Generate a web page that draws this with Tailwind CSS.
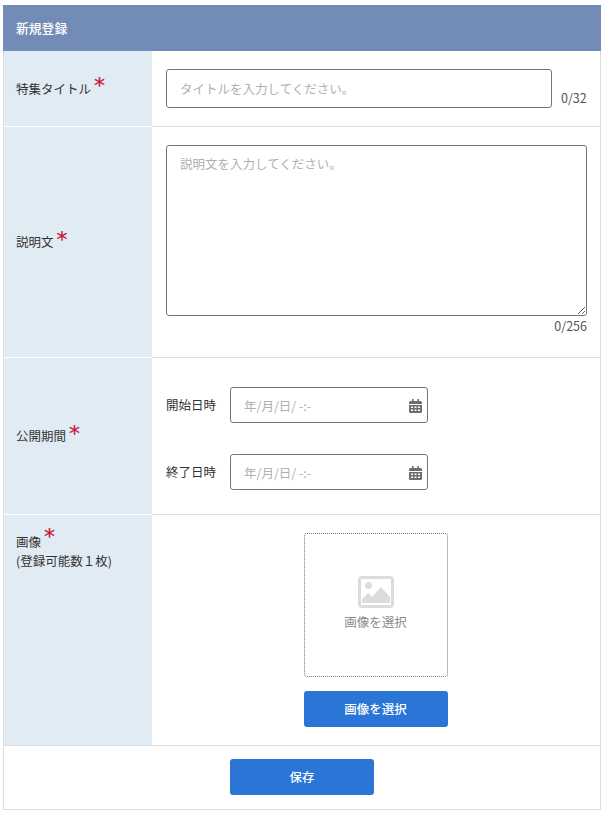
<!DOCTYPE html>
<html lang="ja">
<head>
  <meta charset="UTF-8">
  <meta name="viewport" content="width=device-width, initial-scale=1.0">
  <title>新規登録</title>
  <script src="https://cdn.jsdelivr.net/npm/@tailwindcss/browser@4"></script>
</head>
<body class="bg-white font-['Noto_Sans_CJK_JP','Noto_Sans',sans-serif] text-[12.5px] text-[#333]">
  <div class="w-[598px] ml-[3px] mt-[5px]">
    <!-- Header -->
    <div class="h-[46px] bg-[#728cb7] text-white flex items-center px-[13px] font-medium text-[12.8px]">新規登録</div>

    <div class="border-x border-[#ddd]">
      <!-- タイトル -->
      <div class="flex h-[76px] border-b border-[#ddd]">
        <div class="w-[148px] shrink-0 bg-[#e1ebf4] flex items-center px-3 border-b border-white -mb-px">
          <span class="mt-[1px]">特集タイトル</span>
          <span class="font-['DejaVu_Sans'] text-[#c5162e] text-[22px] leading-none ml-[3px] -mt-[5px] [-webkit-text-stroke:0.2px_#c5162e]">*</span>
        </div>
        <div class="flex-1 pl-[14px] pt-[18px] flex items-start">
          <input type="text" placeholder="タイトルを入力してください。" class="w-[386px] h-[39px] border border-[#767676] rounded-[3px] px-[13px] placeholder:text-[#b0b0b0] outline-none">
          <span class="ml-[9px] mt-[20px] text-[#555]">0/32</span>
        </div>
      </div>

      <!-- 説明文 -->
      <div class="flex h-[231px] border-b border-[#ddd]">
        <div class="w-[148px] shrink-0 bg-[#e1ebf4] flex items-center px-3 border-b border-white -mb-px">
          <span>説明文</span>
          <span class="font-['DejaVu_Sans'] text-[#c5162e] text-[22px] leading-none ml-[3px] -mt-[5px] [-webkit-text-stroke:0.2px_#c5162e]">*</span>
        </div>
        <div class="flex-1 pl-[14px] pr-[13px] pt-[18px]">
          <textarea placeholder="説明文を入力してください。" class="block w-[421px] h-[171px] border border-[#767676] rounded-[3px] px-[13px] py-[9px] placeholder:text-[#b0b0b0] outline-none"></textarea>
          <div class="text-right text-[#555] mt-[1px]">0/256</div>
        </div>
      </div>

      <!-- 公開期間 -->
      <div class="flex h-[157px] border-b border-[#ddd]">
        <div class="w-[148px] shrink-0 bg-[#e1ebf4] flex items-center px-3 border-b border-white -mb-px">
          <span>公開期間</span>
          <span class="font-['DejaVu_Sans'] text-[#c5162e] text-[22px] leading-none ml-[3px] -mt-[5px] [-webkit-text-stroke:0.2px_#c5162e]">*</span>
        </div>
        <div class="flex-1 pl-[14px] pt-[29px] flex flex-col gap-[31px]">
          <div class="flex items-center">
            <span class="w-[64px] mt-[1px]">開始日時</span>
            <div class="relative w-[198px] h-[36px]">
              <input type="text" placeholder="年/月/日/ -:-" class="w-full h-full border border-[#767676] rounded-[3px] px-[13px] placeholder:text-[#b0b0b0] outline-none">
              <svg class="absolute right-[6px] top-[12px]" width="13" height="14" viewBox="0 0 13 14" fill="#6e6e6e"><path d="M3 0h1.600v2H8.400V0H10v2h1.500A1.500 1.500 0 0 1 13 3.500V5H0V3.500A1.500 1.500 0 0 1 1.500 2H3zM0 6h13v6.500A1.500 1.500 0 0 1 11.500 14h-10A1.500 1.500 0 0 1 0 12.500zm2 1.500V9h2V7.500zm3.500 0V9h2V7.500zm3.500 0V9h2V7.500zM2 10.500V12h2v-1.500zm3.500 0V12h2v-1.500zm3.500 0V12h2v-1.500z"/></svg>
            </div>
          </div>
          <div class="flex items-center">
            <span class="w-[64px] mt-[1px]">終了日時</span>
            <div class="relative w-[198px] h-[36px]">
              <input type="text" placeholder="年/月/日/ -:-" class="w-full h-full border border-[#767676] rounded-[3px] px-[13px] placeholder:text-[#b0b0b0] outline-none">
              <svg class="absolute right-[6px] top-[12px]" width="13" height="14" viewBox="0 0 13 14" fill="#6e6e6e"><path d="M3 0h1.600v2H8.400V0H10v2h1.500A1.500 1.500 0 0 1 13 3.500V5H0V3.500A1.500 1.500 0 0 1 1.500 2H3zM0 6h13v6.500A1.500 1.500 0 0 1 11.500 14h-10A1.500 1.500 0 0 1 0 12.500zm2 1.500V9h2V7.500zm3.500 0V9h2V7.500zm3.500 0V9h2V7.500zM2 10.500V12h2v-1.500zm3.500 0V12h2v-1.500zm3.500 0V12h2v-1.500z"/></svg>
            </div>
          </div>
        </div>
      </div>

      <!-- 画像 -->
      <div class="flex h-[231px] border-b border-[#ddd]">
        <div class="w-[148px] shrink-0 bg-[#e1ebf4] px-3 pt-[9px]">
          <div class="flex items-start h-[28px]">
            <span class="mt-[9px]">画像</span>
            <span class="font-['DejaVu_Sans'] text-[#c5162e] text-[22px] leading-none ml-[3px] mt-[2px] [-webkit-text-stroke:0.2px_#c5162e]">*</span>
          </div>
          <div>(登録可能数１枚)</div>
        </div>
        <div class="flex-1 flex flex-col items-center pt-[18px] pr-[1px]">
          <div class="w-[144px] h-[144px] border border-dotted border-[#767676] rounded-[3px] flex flex-col items-center pt-[42px]">
            <svg width="36" height="32" viewBox="0 0 36 32"><path fill="#dcdcdc" fill-rule="evenodd" d="M4 0h28a4 4 0 0 1 4 4v24a4 4 0 0 1-4 4H4a4 4 0 0 1-4-4V4a4 4 0 0 1 4-4zm0 3a1 1 0 0 0-1 1v24a1 1 0 0 0 1 1h28a1 1 0 0 0 1-1V4a1 1 0 0 0-1-1z"/><circle cx="10.500" cy="9.500" r="3.500" fill="#dcdcdc"/><path fill="#dcdcdc" d="M4 27v-4l6-6 4 4 9-10 9 10v6z"/></svg>
            <span class="text-[#8c8c8c] mt-[5px]">画像を選択</span>
          </div>
          <button class="mt-[14px] w-[144px] h-[36px] rounded-[3px] bg-[#2a75d5] text-white font-medium">画像を選択</button>
        </div>
      </div>

      <!-- 保存 -->
      <div class="h-[64px] border-b border-[#ddd] pl-[226px] pt-[13px]">
        <button class="w-[144px] h-[36px] rounded-[3px] bg-[#2a75d5] text-white font-medium">保存</button>
      </div>
    </div>
  </div>
</body>
</html>
